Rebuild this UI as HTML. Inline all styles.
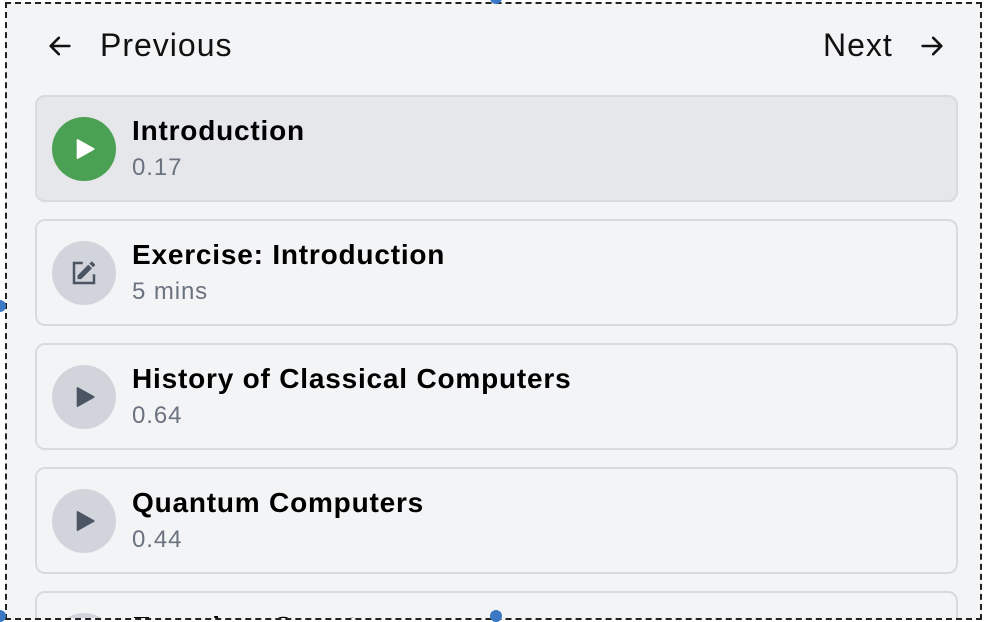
<!DOCTYPE html>
<html><head><meta charset="utf-8"><style>
*{box-sizing:border-box;margin:0;padding:0}
html,body{width:984px;height:622px;overflow:hidden;background:#fff}
body{font-family:"Liberation Sans",sans-serif;position:relative}
.frame{position:absolute;left:5px;top:2px;width:977px;height:618px;background:#f3f4f6;border:2px dashed #222;overflow:hidden}
.nav{position:absolute;top:23px;font-size:32px;letter-spacing:1px;color:#111;line-height:36px}
.card{position:absolute;left:28px;width:923px;height:107px;border:2px solid #d8dadf;border-radius:10px;background:#f3f4f6}
.card.active{background:#e5e7eb}
.ic{position:absolute;left:15px;top:20px;width:64px;height:64px;border-radius:50%;background:#d1d5db;display:flex;align-items:center;justify-content:center}
.t{position:absolute;left:95px;top:18px;font-size:28px;letter-spacing:0.8px;font-weight:bold;color:#000;white-space:nowrap}
.s{position:absolute;left:95px;top:57px;font-size:24px;letter-spacing:0.9px;color:#6b7280}
.dot{position:absolute;width:12px;height:12px;border-radius:50%;background:#3b78c4}
</style></head><body>
<div class="frame">
 <svg style="position:absolute;left:39px;top:28px" width="28" height="28" viewBox="0 0 24 24" fill="none" stroke="#111" stroke-width="2.2" stroke-linecap="round" stroke-linejoin="round"><path d="M20 12H4M11 5l-7 7 7 7"/></svg>
 <div class="nav" style="left:93px">Previous</div>
 <div class="nav" style="left:816px">Next</div>
 <svg style="position:absolute;left:911px;top:28px" width="28" height="28" viewBox="0 0 24 24" fill="none" stroke="#111" stroke-width="2.2" stroke-linecap="round" stroke-linejoin="round"><path d="M4 12h16M13 5l7 7-7 7"/></svg>

 <div class="card active" style="top:91px">
  <div class="ic" style="background:#4aa053"><svg width="26" height="26" viewBox="0 0 24 24"><path d="M6 3.5 L21 12 L6 20.5Z" fill="#fff" stroke="#fff" stroke-width="1.5" stroke-linejoin="round"/></svg></div>
  <div class="t">Introduction</div><div class="s">0.17</div>
 </div>
 <div class="card" style="top:215px">
  <div class="ic"><svg width="30" height="30" viewBox="0 0 24 24" fill="#4b5563"><path d="M3 17.25V21h3.75L17.81 9.94l-3.75-3.75L3 17.25zM20.71 7.04a1 1 0 000-1.41l-2.34-2.34a1 1 0 00-1.41 0l-1.83 1.830 3.75 3.75 1.83-1.83z" transform="translate(4.5 0.5) scale(0.78)"/><path d="M11 4H4v16h16v-7" fill="none" stroke="#4b5563" stroke-width="2"/></svg></div>
  <div class="t">Exercise: Introduction</div><div class="s">5 mins</div>
 </div>
 <div class="card" style="top:339px">
  <div class="ic"><svg width="26" height="26" viewBox="0 0 24 24"><path d="M6 3.5 L21 12 L6 20.5Z" fill="#4b5563" stroke="#4b5563" stroke-width="1.5" stroke-linejoin="round"/></svg></div>
  <div class="t">History of Classical Computers</div><div class="s">0.64</div>
 </div>
 <div class="card" style="top:463px">
  <div class="ic"><svg width="26" height="26" viewBox="0 0 24 24"><path d="M6 3.5 L21 12 L6 20.5Z" fill="#4b5563" stroke="#4b5563" stroke-width="1.5" stroke-linejoin="round"/></svg></div>
  <div class="t">Quantum Computers</div><div class="s">0.44</div>
 </div>
 <div class="card" style="top:587px;height:40px;overflow:hidden">
  <div class="ic"></div>
  <div class="t">Exercise: Quantum</div>
 </div>
</div>
<div class="dot" style="left:-6px;top:300px"></div>
<div class="dot" style="left:490px;top:-8px"></div>
<div class="dot" style="left:490px;top:610px"></div>
<div class="dot" style="left:-6px;top:610px"></div>
</body></html>
